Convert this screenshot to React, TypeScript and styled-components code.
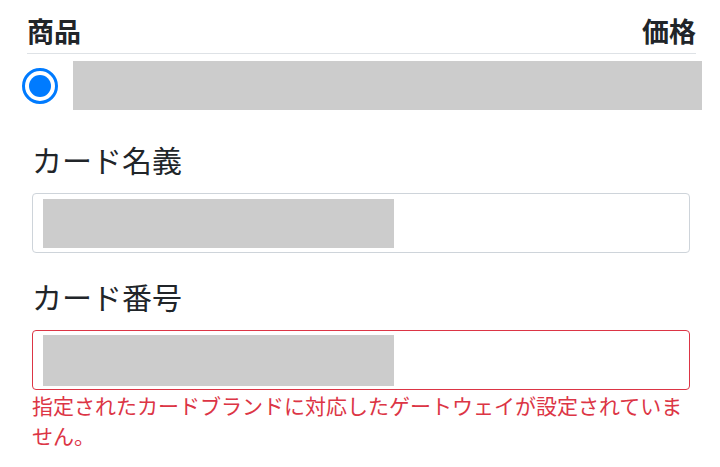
import React, { useState } from "react";
import styled, { createGlobalStyle } from "styled-components";

const GlobalStyle = createGlobalStyle`
  body {
    margin: 0;
    background: #fff;
    font-family: "Noto Sans CJK JP", "Noto Sans", sans-serif;
    color: #212529;
  }
`;

function App() {
  const [selected, setSelected] = useState(true);

  return (
    <Page>
      <GlobalStyle />
      <TableHead>
        <HeadCell>商品</HeadCell>
        <HeadCell>価格</HeadCell>
      </TableHead>
      <ItemRow>
        <Radio checked={selected} onClick={() => setSelected(true)}>
          <RadioDot checked={selected} />
        </Radio>
        <Redacted $width="100%" $height="49px" />
      </ItemRow>

      <Field>
        <Label>カード名義</Label>
        <Input>
          <Redacted $width="351px" $height="49px" />
        </Input>
      </Field>

      <Field $gap="21px">
        <Label>カード番号</Label>
        <Input $invalid>
          <Redacted $width="351px" $height="51px" />
        </Input>
        <ErrorText>
          指定されたカードブランドに対応したゲートウェイが設定されていません。
        </ErrorText>
      </Field>
    </Page>
  );
}

const Page = styled.div`
  width: 720px;
  padding-top: 15px;
`;

const TableHead = styled.div`
  display: flex;
  justify-content: space-between;
  align-items: center;
  margin: 0 24px 0 27px;
  padding-bottom: 6px;
  border-bottom: 1px solid #dee2e6;
`;

const HeadCell = styled.div`
  font-size: 27px;
  font-weight: 700;
  line-height: 32px;
  color: #212529;
`;

const ItemRow = styled.div`
  display: flex;
  align-items: center;
  gap: 15px;
  margin: 7px 18px 0 22px;
`;

const Radio = styled.div<{ checked: boolean }>`
  flex: none;
  width: 36px;
  height: 36px;
  box-sizing: border-box;
  border-radius: 50%;
  border: 3px solid ${(p) => (p.checked ? "#007bff" : "#adb5bd")};
  display: flex;
  align-items: center;
  justify-content: center;
  cursor: pointer;
`;

const RadioDot = styled.div<{ checked: boolean }>`
  width: 22px;
  height: 22px;
  border-radius: 50%;
  background: ${(p) => (p.checked ? "#007bff" : "transparent")};
`;

const Redacted = styled.span<{ $width: string; $height: string }>`
  display: block;
  width: ${(p) => p.$width};
  height: ${(p) => p.$height};
  background: #cccccc;
`;

const Field = styled.div<{ $gap?: string }>`
  display: flex;
  flex-direction: column;
  margin: ${(p) => p.$gap || "27px"} 30px 0 32px;
`;

const Label = styled.label`
  font-size: 30px;
  line-height: 45px;
  color: #212529;
  margin-bottom: 11px;
`;

const Input = styled.div<{ $invalid?: boolean }>`
  height: 60px;
  box-sizing: border-box;
  border: 1px solid ${(p) => (p.$invalid ? "#dc3545" : "#ced4da")};
  border-radius: 4px;
  padding: 5px 10px;
  display: flex;
  align-items: center;
  background: #fff;
`;

const ErrorText = styled.div`
  font-size: 21px;
  line-height: 30px;
  color: #dc3545;
`;

export default App;
